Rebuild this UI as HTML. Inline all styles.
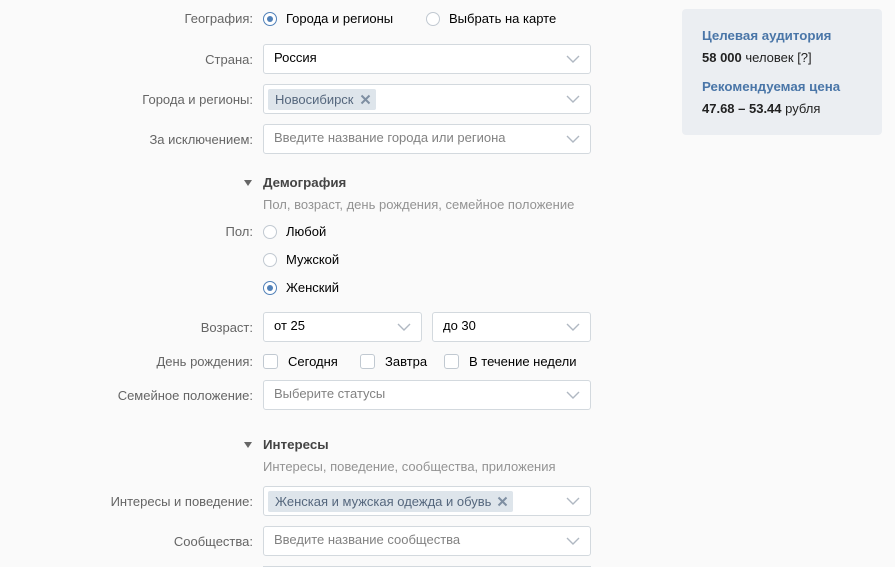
<!DOCTYPE html>
<html style="height:567px;overflow:hidden"><head><meta charset="utf-8"><style>
*{box-sizing:border-box;margin:0;padding:0}
body{width:895px;height:567px;background:#fafafa;font-family:"Liberation Sans",sans-serif;font-size:13px;color:#000;position:relative;overflow:hidden}
.a{position:absolute;white-space:nowrap}
.lbl{position:absolute;right:642px;color:#656565;line-height:16px;text-align:right;white-space:nowrap}
.box{position:absolute;height:30px;background:#fff;border:1px solid #d3d9de;border-radius:3px}
.box .t{position:absolute;left:10px;top:6px;line-height:16px}
.ph{color:#828282}
.chev{position:absolute;right:10px;top:9px;width:14px;height:10px}
.tag{position:absolute;left:4px;top:4px;height:21px;background:#dee5eb;border-radius:2px;color:#55677d;padding:0 22px 0 7px;line-height:21px}
.x{position:absolute;right:5px;top:5px;width:11px;height:11px}
.r{position:absolute;width:14px;height:14px;border:1px solid #c1c9d1;border-radius:50%;background:#fff}
.r.on{border-color:#5181b8}
.r.on:after{content:"";position:absolute;left:3px;top:3px;width:6px;height:6px;border-radius:50%;background:#5181b8}
.c{position:absolute;width:15px;height:15px;border:1px solid #c1c9d1;border-radius:3px;background:#fff}
.h{font-weight:bold;color:#444;font-size:13.3px}
.sub{color:#939393}
.tri{position:absolute;width:0;height:0;border-left:4px solid transparent;border-right:4px solid transparent;border-top:6px solid #666}
</style></head><body>
<svg width="0" height="0" style="position:absolute"><defs><symbol id="cv" viewBox="0 0 14 10"><path d="M1 2l6 6 6-6" fill="none" stroke="#b0b8c2" stroke-width="1.4"/></symbol><symbol id="cx" viewBox="0 0 11 11"><path d="M1.5 1.5l8 8M9.5 1.5l-8 8" stroke="#7f8fa2" stroke-width="2"/></symbol></defs></svg>

<div class="lbl" style="top:11px">География:</div>
<div class="r on" style="left:263px;top:12px"></div><div class="a" style="left:286px;top:11px">Города и регионы</div>
<div class="r" style="left:426px;top:12px"></div><div class="a" style="left:449px;top:11px">Выбрать на карте</div>

<div class="lbl" style="top:52px">Страна:</div>
<div class="box" style="left:263px;top:44px;width:328px"><div class="t" style="top:5px">Россия</div><svg class="chev"><use href="#cv"/></svg></div>

<div class="lbl" style="top:92px">Города и регионы:</div>
<div class="box" style="left:263px;top:84px;width:328px"><div class="tag">Новосибирск<svg class="x"><use href="#cx"/></svg></div><svg class="chev"><use href="#cv"/></svg></div>

<div class="lbl" style="top:132px">За исключением:</div>
<div class="box" style="left:263px;top:124px;width:328px"><div class="t ph" style="top:5px">Введите название города или региона</div><svg class="chev"><use href="#cv"/></svg></div>

<div class="tri" style="left:244px;top:180px"></div>
<div class="a h" style="left:263px;top:175px">Демография</div>
<div class="a sub" style="left:263px;top:197px">Пол, возраст, день рождения, семейное положение</div>

<div class="lbl" style="top:224px">Пол:</div>
<div class="r" style="left:263px;top:225px"></div><div class="a" style="left:286px;top:224px">Любой</div>
<div class="r" style="left:263px;top:253px"></div><div class="a" style="left:286px;top:252px">Мужской</div>
<div class="r on" style="left:263px;top:281px"></div><div class="a" style="left:286px;top:280px">Женский</div>

<div class="lbl" style="top:320px">Возраст:</div>
<div class="box" style="left:263px;top:312px;width:159px"><div class="t" style="top:5px">от 25</div><svg class="chev"><use href="#cv"/></svg></div>
<div class="box" style="left:432px;top:312px;width:159px"><div class="t" style="top:5px">до 30</div><svg class="chev"><use href="#cv"/></svg></div>

<div class="lbl" style="top:354px">День рождения:</div>
<div class="c" style="left:263px;top:354px"></div><div class="a" style="left:288px;top:354px">Сегодня</div>
<div class="c" style="left:360px;top:354px"></div><div class="a" style="left:385px;top:354px">Завтра</div>
<div class="c" style="left:444px;top:354px"></div><div class="a" style="left:469px;top:354px">В течение недели</div>

<div class="lbl" style="top:388px">Семейное положение:</div>
<div class="box" style="left:263px;top:380px;width:328px"><div class="t ph" style="top:5px">Выберите статусы</div><svg class="chev"><use href="#cv"/></svg></div>

<div class="tri" style="left:244px;top:442px"></div>
<div class="a h" style="left:263px;top:437px">Интересы</div>
<div class="a sub" style="left:263px;top:459px">Интересы, поведение, сообщества, приложения</div>

<div class="lbl" style="top:494px">Интересы и поведение:</div>
<div class="box" style="left:263px;top:486px;width:328px"><div class="tag">Женская и мужская одежда и обувь<svg class="x"><use href="#cx"/></svg></div><svg class="chev"><use href="#cv"/></svg></div>

<div class="lbl" style="top:534px">Сообщества:</div>
<div class="box" style="left:263px;top:526px;width:328px"><div class="t ph" style="top:5px">Введите название сообщества</div><svg class="chev"><use href="#cv"/></svg></div>

<div class="a" style="left:263px;top:566px;width:328px;height:1px;background:#d3d9de"></div>

<div class="a" style="left:682px;top:9px;width:200px;height:126px;background:#ebeef2;border-radius:4px"></div>
<div class="a" style="left:702px;top:28px;font-weight:bold;color:#4a76a8;font-size:13.3px">Целевая аудитория</div>
<div class="a" style="left:702px;top:50px;color:#222"><b>58 000</b> человек [?]</div>
<div class="a" style="left:702px;top:79px;font-weight:bold;color:#4a76a8;font-size:13.3px">Рекомендуемая цена</div>
<div class="a" style="left:702px;top:101px;color:#222"><b>47.68 – 53.44</b> рубля</div>
</body></html>
